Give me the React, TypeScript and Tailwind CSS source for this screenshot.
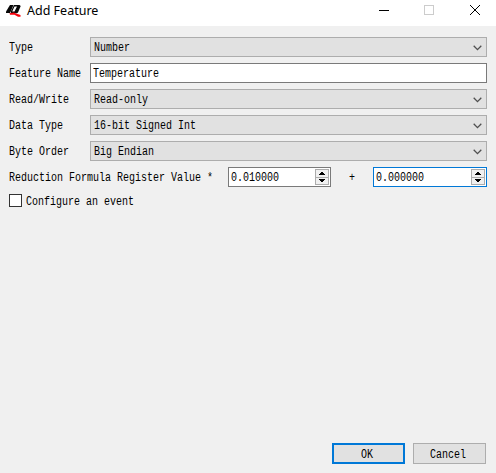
import type { ReactNode } from "react";

function T({ children }: { children: ReactNode }) {
  return (
    <span className="block w-max origin-left scale-x-[0.8333] whitespace-pre font-['Liberation_Mono',monospace] text-[12px] leading-[14px] text-black">
      {children}
    </span>
  );
}

function Label({ children }: { children: ReactNode }) {
  return (
    <div className="flex w-[81px] shrink-0 items-center pt-px">
      <T>{children}</T>
    </div>
  );
}

function Combo({ label, value }: { label: string; value: string }) {
  return (
    <div className="flex h-5">
      <Label>{label}</Label>
      <div className="flex flex-1 items-center justify-between border border-[#adadad] bg-[#e1e1e1] pt-[2px] pr-1 pl-[3px]">
        <T>{value}</T>
        <svg width="9" height="6" viewBox="0 0 9 6">
          <path d="M0.7 0.8 4.5 4.6 8.3 0.8" fill="none" stroke="#505050" strokeWidth="1.3" />
        </svg>
      </div>
    </div>
  );
}

function Spin({ value, className }: { value: string; className: string }) {
  return (
    <div className={`flex h-5 items-center justify-between border bg-white pr-px pl-[2px] ${className}`}>
      <div className="pt-[2px]">
        <T>{value}</T>
      </div>
      <div className="flex h-4 w-[14px] flex-col border border-[#acacac] bg-[#f0f0f0]">
        <div className="flex h-2 justify-center border-b border-[#acacac] pt-[2px]">
          <svg width="6" height="3" viewBox="0 0 6 3" shapeRendering="crispEdges">
            <path d="M2 0h2v1h1v1h1v1H0V2h1V1h1z" fill="#000" />
          </svg>
        </div>
        <div className="flex h-[6px] justify-center pt-px">
          <svg width="6" height="3" viewBox="0 0 6 3" shapeRendering="crispEdges">
            <path d="M0 0h6v1H5v1H4v1H2V2H1V1H0z" fill="#000" />
          </svg>
        </div>
      </div>
    </div>
  );
}

export default function App() {
  return (
    <div className="flex h-[473px] w-[496px] flex-col bg-[#f0f0f0]">
      <header className="flex h-[26px] items-start bg-white pl-[6px]">
        <svg width="15" height="12" viewBox="0 0 15 12" className="mt-[5px]">
          <path d="M4 0h3.5L4 8H0V6.500z" fill="#080808" />
          <path d="M8 0h5.500l1.200 1L12 7.500l-1 .8H4.500L5.500 6.500H8.500L11 1.500H8.500L6 7H4.500z" fill="#080808" />
          <path d="M3.500 8.200 8 7.500l2 1 4.500 1.500v1.700h-2.500L8.500 9.700 4 9.700z" fill="#f5000c" />
        </svg>
        <span className="mt-[3px] ml-[6px] font-['Noto_Sans',sans-serif] text-[12.5px] leading-4 text-black">Add Feature</span>
        <svg width="104" height="12" viewBox="0 0 104 12" className="mt-1 mr-[14px] ml-auto" fill="none">
          <path d="M1 6.5h10" stroke="#000" />
          <rect x="46.5" y="1.5" width="9" height="9" stroke="#ccc" />
          <path d="m92 1 10 10M102 1 92 11" stroke="#000" />
        </svg>
      </header>
      <main className="flex flex-1 flex-col gap-[6px] pt-[11px] pr-[9px] pl-[9px]">
        <Combo label="Type" value="Number" />
        <div className="flex h-5">
          <Label>Feature Name</Label>
          <div className="flex flex-1 items-center border border-[#7a7a7a] bg-white pt-[2px] pl-[2px]">
            <T>Temperature</T>
          </div>
        </div>
        <Combo label="Read/Write" value="Read-only" />
        <Combo label="Data Type" value="16-bit Signed Int" />
        <Combo label="Byte Order" value="Big Endian" />
        <div className="flex h-5 items-center">
          <div className="w-[219px] shrink-0 pt-px">
            <T>Reduction Formula Register Value *</T>
          </div>
          <Spin value="0.010000" className="w-[103px] border-[#7a7a7a]" />
          <div className="w-[42px] pt-px pl-[18px]">
            <T>+</T>
          </div>
          <Spin value="0.000000" className="w-[114px] border-[#0078d7]" />
        </div>
        <div className="mt-px flex h-[13px] items-center gap-1">
          <div className="h-[13px] w-[13px] border border-[#333] bg-white" />
          <div className="pt-[2px]">
            <T>Configure an event</T>
          </div>
        </div>
      </main>
      <footer className="flex justify-end gap-2 pr-[10px] pb-[9px]">
        <button className="flex h-[21px] w-[73px] items-center border-2 border-[#0078d7] bg-[#e1e1e1] pt-[3px] pl-[27px]">
          <T>OK</T>
        </button>
        <button className="flex h-[21px] w-[73px] items-center border border-[#adadad] bg-[#e1e1e1] pt-[3px] pl-[16px]">
          <T>Cancel</T>
        </button>
      </footer>
    </div>
  );
}
